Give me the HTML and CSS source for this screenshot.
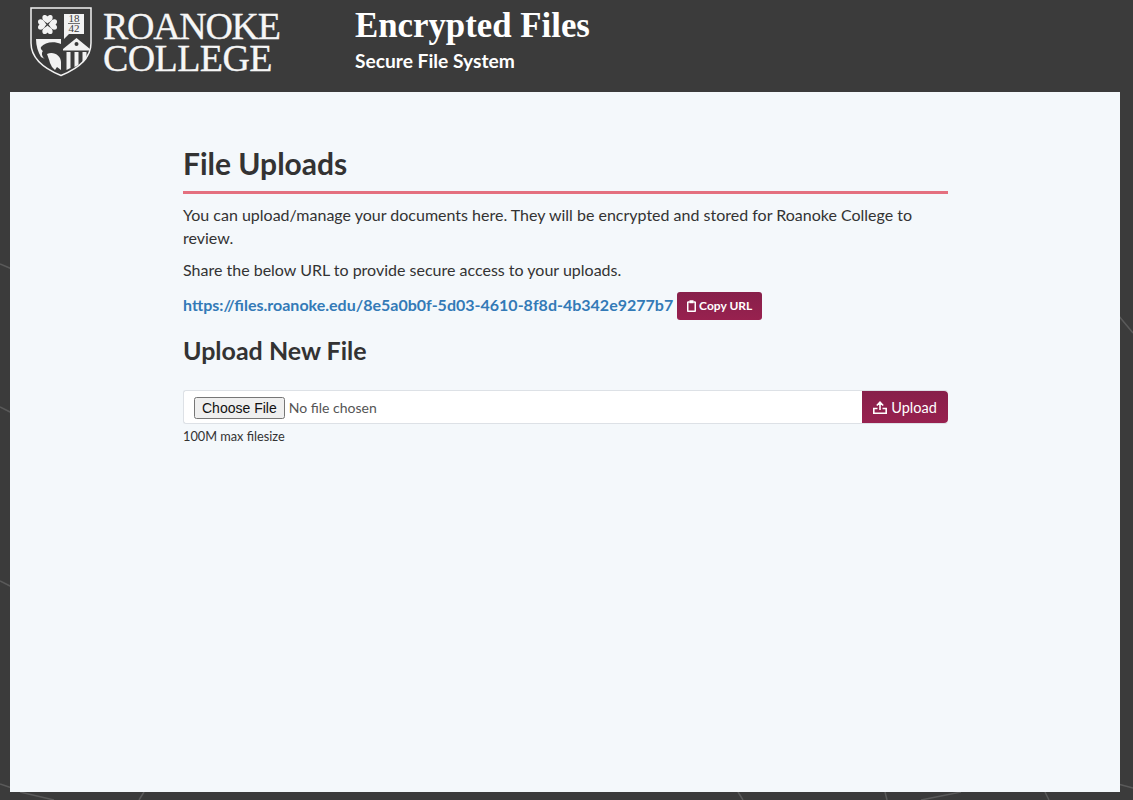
FILE: index.html
```html
<!DOCTYPE html>
<html lang="en">
<head>
<meta charset="utf-8">
<title>Encrypted Files</title>
<link rel="stylesheet" href="styles.css">
</head>
<body>
<svg class="backdrop" width="1133" height="800" viewBox="0 0 1133 800" aria-hidden="true">
  <path d="M0 264L12 269M0 407L12 413M0 581L12 587M0 784L12 788M20 792L54 800M144 792L139 800M738 792L743 800M885 792L887 800M961 792L921 800M1045 792L1049 800M1118 315L1133 333M1118 784L1133 788"/>
</svg>
<header class="topbar">
  <div class="brand">
    <svg class="crest" width="62" height="70" viewBox="0 0 62 70" aria-hidden="true">
      <path class="crest-line" d="M1 1H61V36C61 52 47 62 31 68.500C15 62 1 52 1 36Z"/>
      <g class="crest-fill">
        <path d="M17.500 16.500C15.500 14.500 11.500 13.500 12.500 9.500C13 7.500 16 7.500 17.500 9.500C19 7.500 22 7.500 22.500 9.500C23.500 13.500 19.500 14.500 17.500 16.500Z"/>
        <path transform="rotate(90 17.500 17.500)" d="M17.500 16.500C15.500 14.500 11.500 13.500 12.500 9.500C13 7.500 16 7.500 17.500 9.500C19 7.500 22 7.500 22.500 9.500C23.500 13.500 19.500 14.500 17.500 16.500Z"/>
        <path transform="rotate(180 17.500 17.500)" d="M17.500 16.500C15.500 14.500 11.500 13.500 12.500 9.500C13 7.500 16 7.500 17.500 9.500C19 7.500 22 7.500 22.500 9.500C23.500 13.500 19.500 14.500 17.500 16.500Z"/>
        <path transform="rotate(270 17.500 17.500)" d="M17.500 16.500C15.500 14.500 11.500 13.500 12.500 9.500C13 7.500 16 7.500 17.500 9.500C19 7.500 22 7.500 22.500 9.500C23.500 13.500 19.500 14.500 17.500 16.500Z"/>
        <path d="M34 7H54V27H39L34 32Z"/>
        <path d="M6 32L31 32V37C24 34 15 35 11 40C10 42 13 44 13 44C11 46 12 50 15 52L11 50C8 45 6 39 6 32Z"/>
        <path d="M17 47C24 44 31 49 31 55V63L27 60L25 63L22 60L20 56C19 52 18 50 17 47Z"/>
        <path d="M46.500 31L60 42V43.500H33V42ZM46.500 35A2 2 0 1 0 46.500 39A2 2 0 1 0 46.500 35Z" fill-rule="evenodd"/>
        <path d="M36.500 45H40.500V61L36.500 63ZM44.500 45H48.500V58L44.500 60ZM52.500 45H56.500V52L52.500 56Z"/>
      </g>
      <path class="crest-rule" d="M38 16.500H50"/>
      <text class="crest-year" x="44" y="15">18</text>
      <text class="crest-year" x="44" y="25">42</text>
    </svg>
    <div class="wordmark"><span class="word-top">ROANOKE</span><span class="word-bottom">COLLEGE</span></div>
  </div>
  <div class="titles">
    <h1 class="site-title">Encrypted Files</h1>
    <p class="site-sub">Secure File System</p>
  </div>
</header>
<main class="panel">
  <div class="content">
    <h2 class="page-title">File Uploads</h2>
    <p class="copy">You can upload/manage your documents here. They will be encrypted and stored for Roanoke College to review.</p>
    <p class="copy">Share the below URL to provide secure access to your uploads.</p>
    <div class="share">
      <a class="share-link" href="#">https://files.roanoke.edu/8e5a0b0f-5d03-4610-8f8d-4b342e9277b7</a>
      <button class="btn btn-small" type="button">
        <svg width="9" height="12" viewBox="0 0 9 12" aria-hidden="true"><path class="icon-line" d="M2.500 2H1.300A.7.7 0 0 0 .7 2.700V10.600A.7.7 0 0 0 1.300 11.300H7.700A.7.7 0 0 0 8.300 10.600V2.700A.7.7 0 0 0 7.700 2H6.500"/><rect class="icon-solid" x="2.300" y=".3" width="4.400" height="3" rx=".6"/></svg>
        Copy URL
      </button>
    </div>
    <h3 class="section-title">Upload New File</h3>
    <form class="upload-row">
      <input class="file-field" type="file">
      <button class="btn btn-upload" type="button">
        <svg width="14" height="13" viewBox="0 0 14 13" aria-hidden="true"><path class="icon-line" d="M7 9V1.500M3.800 4.500L7 1.200L10.200 4.500M4.500 7.500H.8V12.200H13.200V7.500H9.500"/></svg>
        Upload
      </button>
    </form>
    <p class="hint">100M max filesize</p>
  </div>
</main>
</body>
</html>
```
FILE: styles.css
```css
* { box-sizing: border-box; }
html, body { margin: 0; height: 800px; overflow: hidden; }
body {
  position: relative;
  background: #3b3b3b;
  font-family: Lato, "Open Sans", sans-serif;
  color: #333;
  display: flex;
  flex-direction: column;
}
.backdrop { position: absolute; left: 0; top: 0; }
.backdrop path { stroke: #5a5a5a; stroke-width: 1.500; fill: none; }
.topbar {
  position: relative;
  height: 92px;
  display: flex;
  padding-left: 30px;
  color: #fff;
}
.brand { display: flex; width: 325px; padding-top: 7px; gap: 11px; align-items: flex-start; }
.crest-line { fill: none; stroke: #f2f2f2; stroke-width: 1.500; }
.crest-fill { fill: #f2f2f2; }
.crest-rule { stroke: #3b3b3b; stroke-width: .7; }
.crest-year { font: 11px "Liberation Serif", serif; fill: #3b3b3b; text-anchor: middle; }
.wordmark {
  font-family: "Liberation Serif", serif;
  font-size: 38px;
  line-height: 32px;
  padding-top: 3px;
  color: #f6f6f6;
}
.word-top { display: block; letter-spacing: -1.300px; -webkit-text-stroke: .3px #f6f6f6; }
.word-bottom { display: block; letter-spacing: -.6px; -webkit-text-stroke: .3px #f6f6f6; }
.titles { padding-top: 6px; }
.site-title {
  margin: 0;
  font-family: "Liberation Serif", serif;
  font-weight: 700;
  font-size: 34.800px;
  line-height: 40px;
}
.site-sub { margin: 3px 0 0; font-weight: 700; font-size: 19.200px; line-height: 24px; }
.panel {
  position: relative;
  margin: 0 13px 8px 10px;
  flex: 1;
  background: #f4f8fb;
  padding: 0 172px 0 173px;
}
.page-title {
  margin: 0;
  padding: 52px 0 9px;
  font-size: 30px;
  line-height: 38px;
  font-weight: 700;
  color: #333;
  border-bottom: 3px solid #e4707f;
}
.copy { margin: 10px 0 0; font-size: 16px; line-height: 22.500px; }
.share { display: flex; align-items: center; gap: 4px; margin-top: 10px; height: 28px; }
.share-link { font-weight: 700; font-size: 16px; color: #337ab7; text-decoration: none; margin-bottom: 2px; }
.btn {
  border: 0;
  background: linear-gradient(#87204a, #98214f);
  color: #fff;
  font-family: Lato, sans-serif;
  display: inline-flex;
  align-items: center;
  justify-content: center;
}
.btn-small { width: 85px; height: 28px; border-radius: 3px; font-size: 12px; font-weight: 700; gap: 3px; padding: 0; }
.icon-line { fill: none; stroke: #fff; stroke-width: 1.600; }
.icon-solid { fill: #fff; }
.section-title { margin: 15px 0 0; font-size: 25px; line-height: 30px; font-weight: 700; color: #333; }
.upload-row {
  display: flex;
  margin-top: 25px;
  height: 34px;
  background: #fff;
  border: 1px solid #dde1e6;
  border-right: 0;
  border-radius: 3px;
}
.file-field {
  flex: 1;
  padding: 6px 10px;
  font-family: Lato, sans-serif;
  font-size: 14px;
  color: #555;
  min-width: 0;
}
.file-field::file-selector-button { font-family: "Liberation Sans", sans-serif; font-size: 14px; color: #111; }
.btn-upload { width: 86px; height: 32px; font-size: 14.500px; gap: 4px; padding: 1px 0 0; border-radius: 0 4px 4px 0; }
.hint { margin: 4px 0 0; font-size: 12.750px; line-height: 16px; color: #333; }
```
